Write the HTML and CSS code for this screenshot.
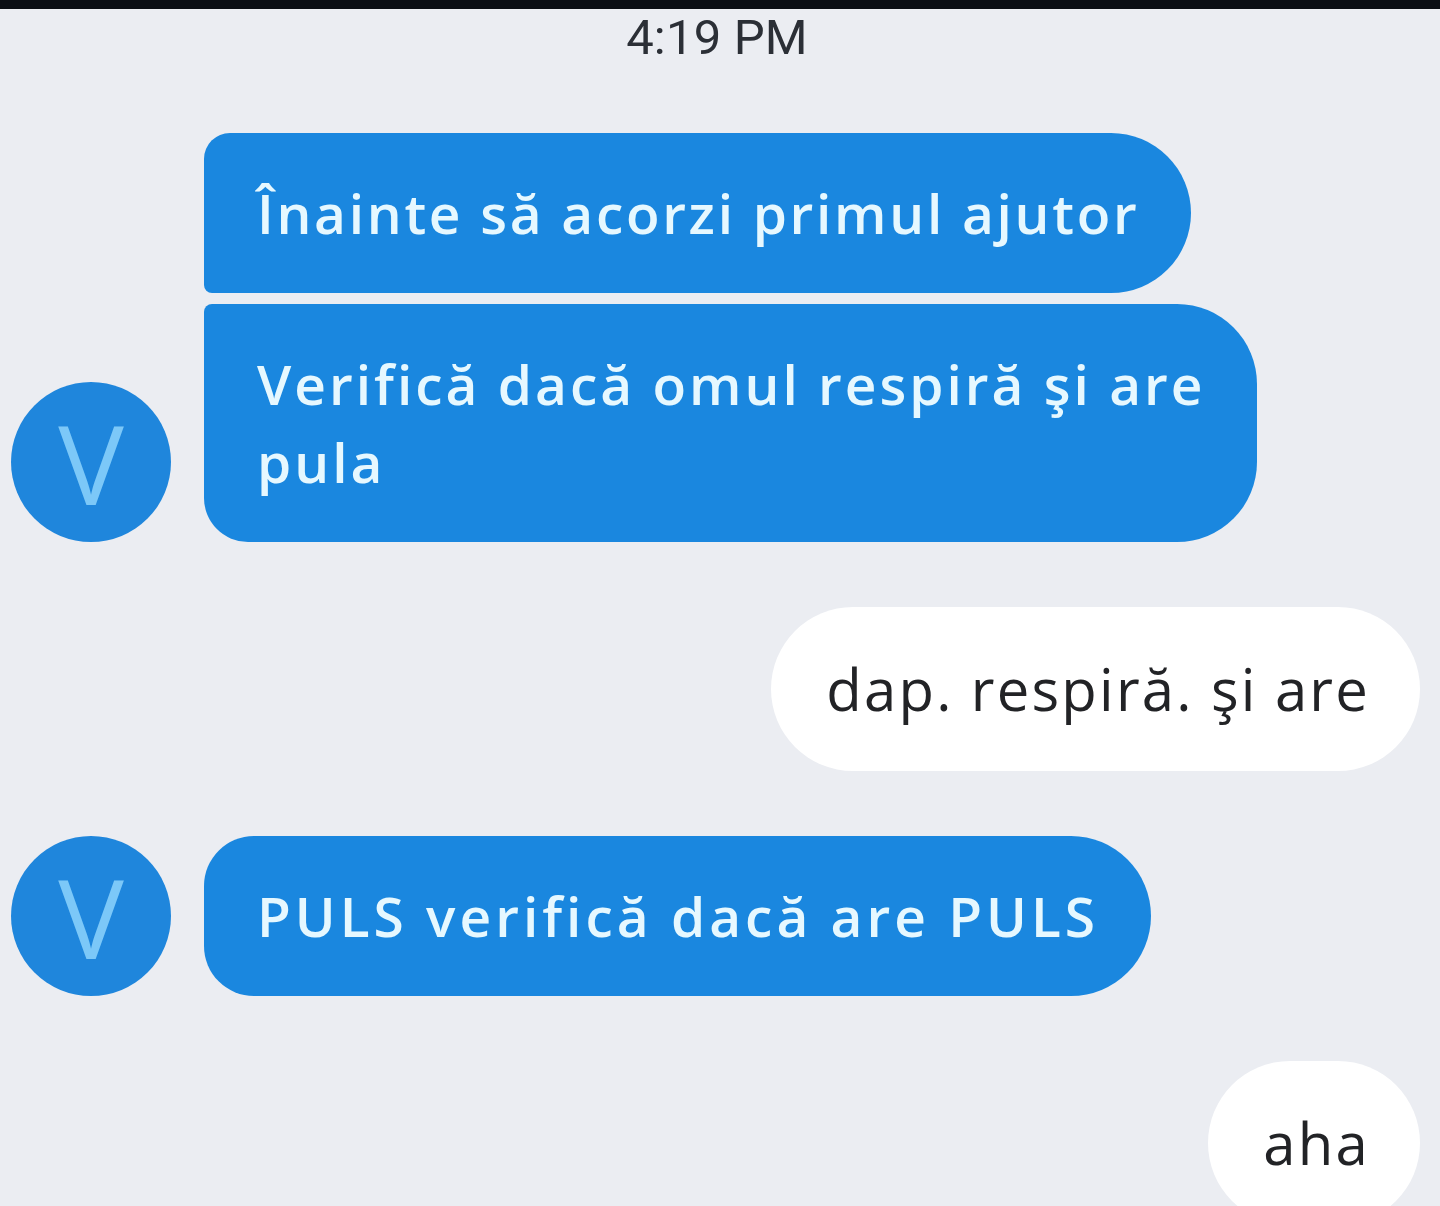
FILE: index.html
```html
<!DOCTYPE html>
<html lang="ro">
<head>
    <meta charset="UTF-8">
    <meta name="viewport" content="width=device-width, initial-scale=1.0">
    <title>Mesaje</title>
    <link rel="stylesheet" href="styles.css">
</head>
<body>

<div class="topbar"></div>

<div class="chat">
    <div class="time">4:19 PM</div>

    <div class="group incoming">
        <div class="avatar">V</div>
        <div class="bubbles">
            <div class="bubble blue first">Înainte să acorzi primul ajutor</div>
            <div class="bubble blue last">Verifică dacă omul respiră şi are<br>pula</div>
        </div>
    </div>

    <div class="group outgoing">
        <div class="bubble white">dap. respiră. şi are</div>
    </div>

    <div class="group incoming">
        <div class="avatar">V</div>
        <div class="bubbles">
            <div class="bubble blue single">PULS verifică dacă are PULS</div>
        </div>
    </div>

    <div class="group outgoing">
        <div class="bubble white">aha</div>
    </div>
</div>

</body>
</html>
```

FILE: styles.css
```css
body {
    margin: 0;
    padding: 0;
    background-color: #ebedf2;
    font-family: 'Open Sans', 'Liberation Sans', sans-serif;
    font-feature-settings: "locl" 0;
    overflow: hidden;
}
.topbar {
    height: 9px;
    background-color: #0b0e14;
}
.chat {
    display: flex;
    flex-direction: column;
    gap: 65px;
}
.time {
    text-align: center;
    font-family: 'Roboto', sans-serif;
    font-size: 49px;
    line-height: 58px;
    color: #2b2f36;
    letter-spacing: 0.2px;
    margin-bottom: 1px;
    padding-right: 6px;
}
.group {
    display: flex;
    align-items: flex-end;
}
.incoming {
    padding-left: 11px;
    gap: 33px;
}
.outgoing {
    justify-content: flex-end;
    padding-right: 20px;
}
.avatar {
    width: 160px;
    height: 160px;
    flex-shrink: 0;
    border-radius: 50%;
    background-color: #1f86dc;
    color: #7cc8f8;
    font-size: 110px;
    line-height: 160px;
    text-align: center;
}
.bubbles {
    display: flex;
    flex-direction: column;
    align-items: flex-start;
    gap: 11px;
}
.bubble {
    font-size: 55px;
    line-height: 78px;
    padding: 41px 52px 41px 53px;
}
.blue {
    background-color: #1a87df;
    color: #e6f8ff;
    font-weight: 600;
    letter-spacing: 3px;
}
.first {
    border-radius: 26px 80px 80px 8px;
    letter-spacing: 2.7px;
}
.last {
    border-radius: 8px 80px 80px 44px;
}
.single {
    border-radius: 50px 80px 80px 50px;
    letter-spacing: 4px;
}
.white {
    background-color: #ffffff;
    color: #222326;
    font-size: 58px;
    letter-spacing: 2.2px;
    border-radius: 82px;
    padding: 43px 50px 43px 55px;
}
```
